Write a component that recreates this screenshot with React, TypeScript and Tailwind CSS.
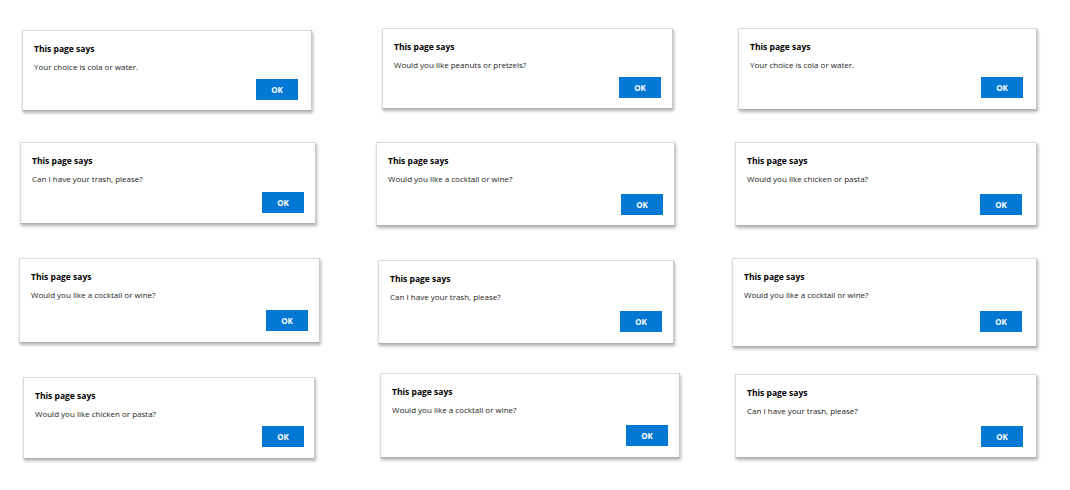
const dialogs = [
  { msg: "Your choice is cola or water.", box: "ml-[22px] mt-[30px] w-[290px] h-[81px]", btn: "mr-[13px] mb-[10px]" },
  { msg: "Would you like peanuts or pretzels?", box: "ml-[22px] mt-[28px] w-[291px] h-[81px]", btn: "mr-[11px] mb-[10px]" },
  { msg: "Your choice is cola or water.", box: "ml-[18px] mt-[28px] w-[299px] h-[82px]", btn: "mr-[13px] mb-[11px]" },
  { msg: "Can I have your trash, please?", box: "ml-[20px] mt-[7px] w-[296px] h-[82px]", btn: "mr-[11px] mb-[10px]" },
  { msg: "Would you like a cocktail or wine?", box: "ml-[16px] mt-[7px] w-[299px] h-[84px]", btn: "mr-[11px] mb-[10px]" },
  { msg: "Would you like chicken or pasta?", box: "ml-[15px] mt-[7px] w-[302px] h-[84px]", btn: "mr-[14px] mb-[10px]" },
  { msg: "Would you like a cocktail or wine?", box: "ml-[19px] mt-[8px] w-[301px] h-[85px]", btn: "mr-[11px] mb-[11px]" },
  { msg: "Can I have your trash, please?", box: "ml-[18px] mt-[10px] w-[296px] h-[84px]", btn: "mr-[11px] mb-[11px]" },
  { msg: "Would you like a cocktail or wine?", box: "ml-[12px] mt-[8px] w-[305px] h-[89px]", btn: "mr-[14px] mb-[14px]" },
  { msg: "Would you like chicken or pasta?", box: "ml-[23px] mt-[12px] w-[292px] h-[82px]", btn: "mr-[10px] mb-[11px]" },
  { msg: "Would you like a cocktail or wine?", box: "ml-[20px] mt-[8px] w-[300px] h-[85px]", btn: "mr-[11px] mb-[11px]" },
  { msg: "Can I have your trash, please?", box: "ml-[15px] mt-[9px] w-[302px] h-[84px]", btn: "mr-[13px] mb-[10px]" },
];

function AlertBox({ msg, box, btn }: { msg: string; box: string; btn: string }) {
  return (
    <div
      className={`${box} flex flex-col bg-white border border-[#dcdcdc] border-b-[#b0b0b0] border-r-[#c8c8c8] shadow-[1px_2px_3px_rgba(0,0,0,0.3)]`}
    >
      <div className="px-[11px] pt-[12px] text-[8.5px] leading-[12px] font-bold text-black">
        This page says
      </div>
      <div className="px-[11px] mt-[6px] text-[8px] leading-[12px] text-[#1c1c1c]">
        {msg}
      </div>
      <div className="mt-auto flex justify-end">
        <button
          className={`${btn} w-[42px] h-[21px] bg-[#0078d4] text-white text-[8px] font-bold flex items-center justify-center`}
        >
          OK
        </button>
      </div>
    </div>
  );
}

export default function App() {
  return (
    <div className="w-[1070px] h-[490px] bg-white font-['Segoe_UI','Open_Sans','Noto_Sans',sans-serif] grid grid-cols-[360px_360px_350px] grid-rows-[135px_115px_115px_125px]">
      {dialogs.map((d, i) => (
        <div key={i}>
          <AlertBox {...d} />
        </div>
      ))}
    </div>
  );
}
